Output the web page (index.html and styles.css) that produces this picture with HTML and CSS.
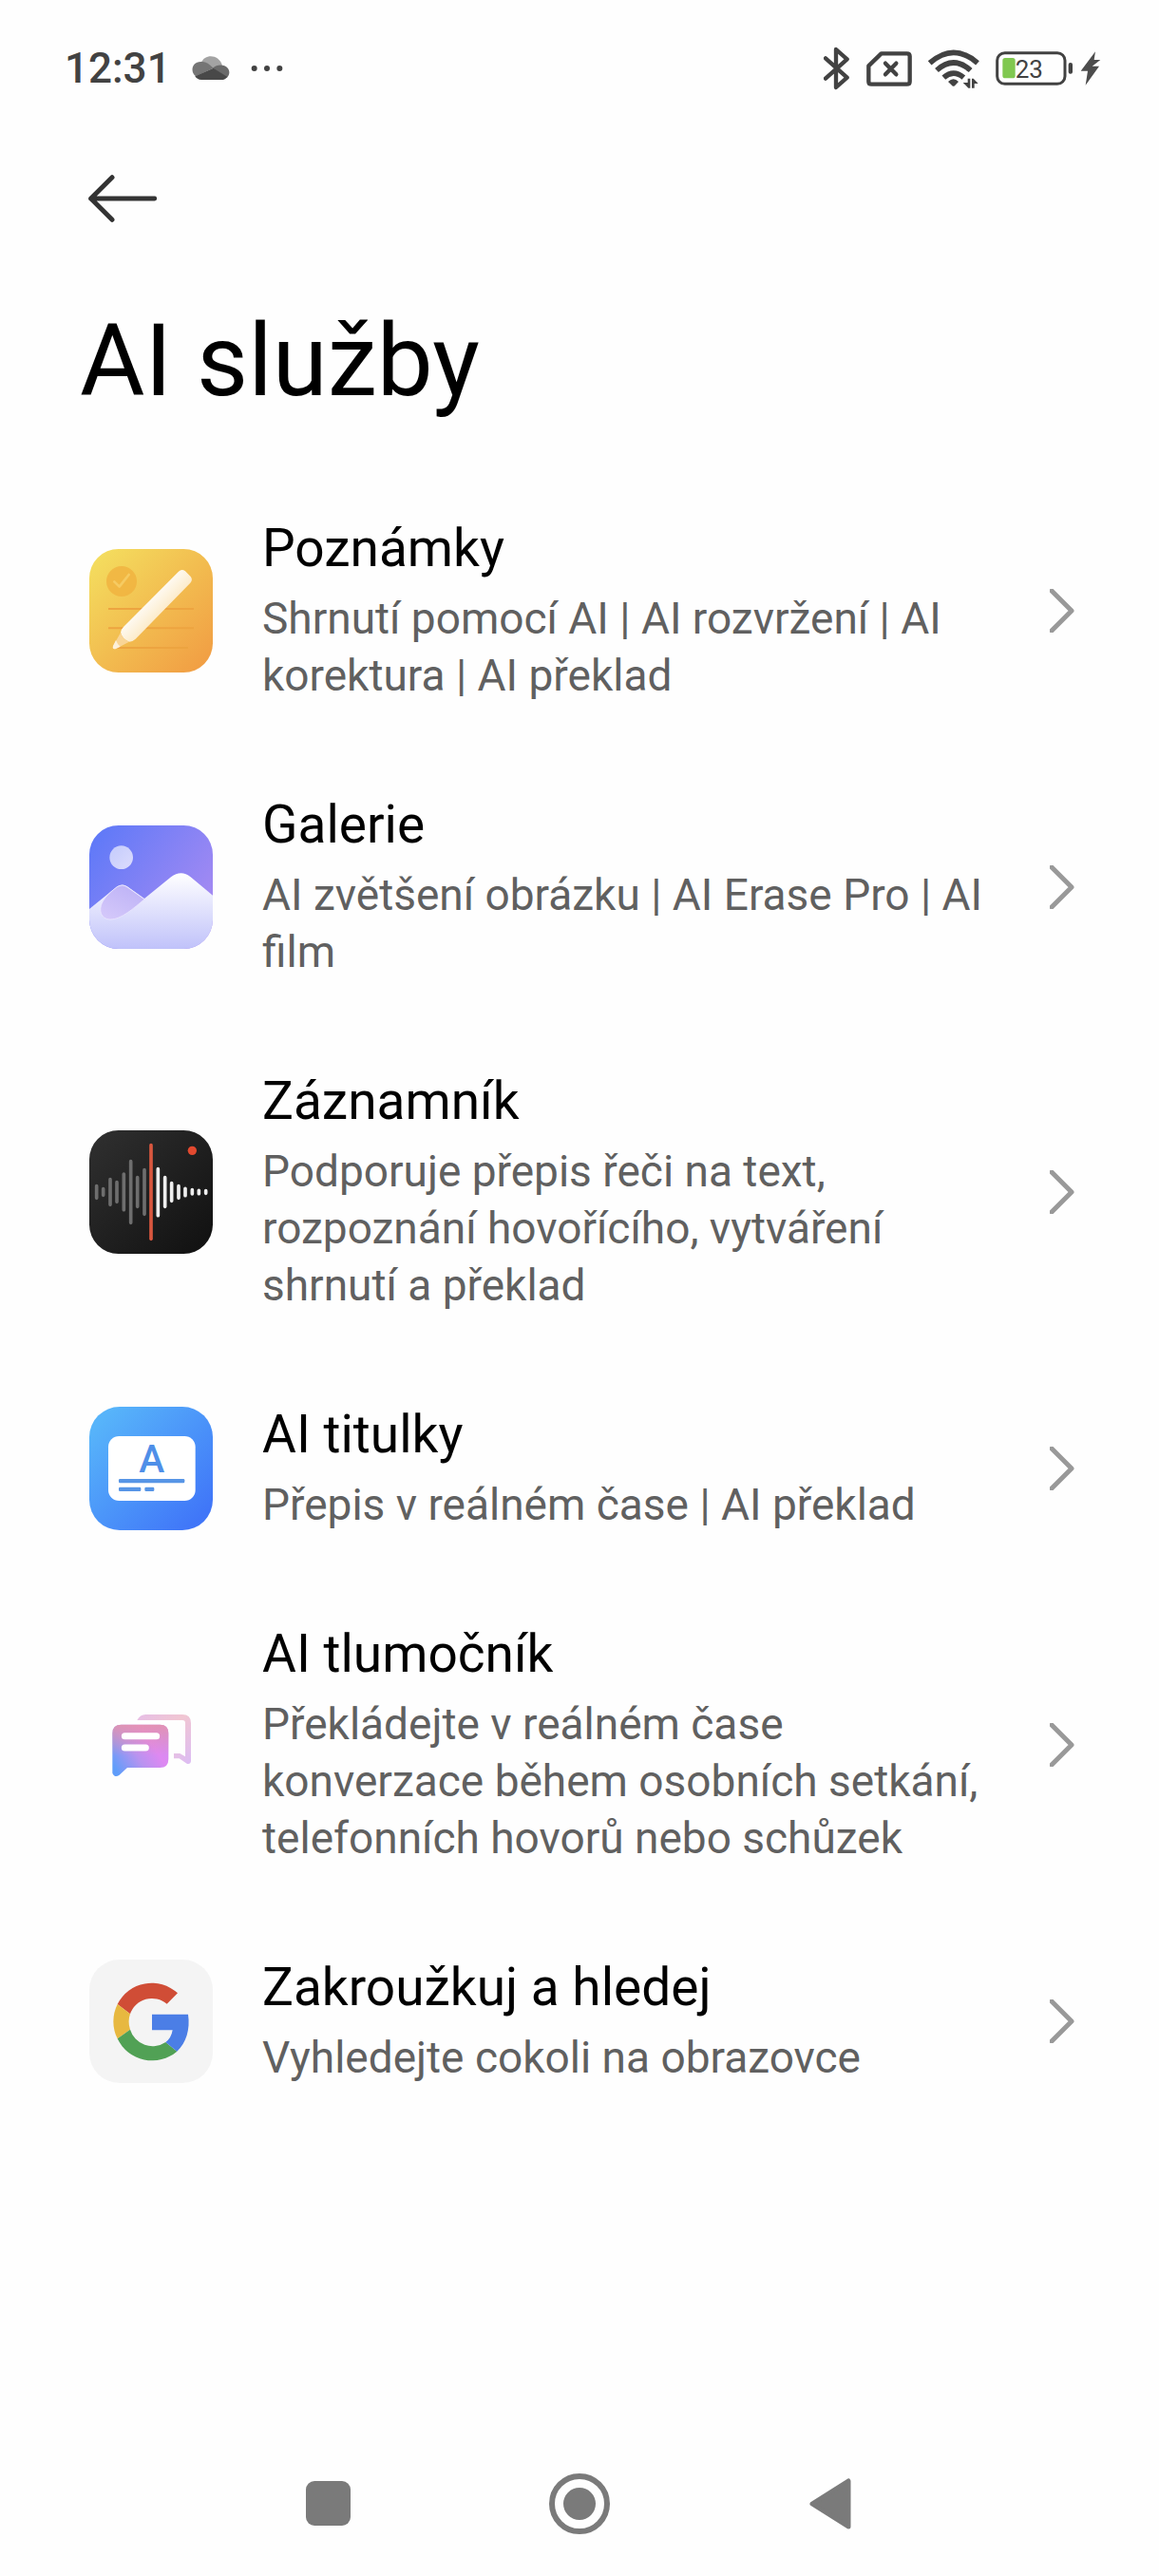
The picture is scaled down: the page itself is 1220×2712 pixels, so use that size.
FILE: index.html
```html
<!DOCTYPE html>
<html lang="cs">
<head>
    <meta charset="UTF-8">
    <meta name="viewport" content="width=device-width, initial-scale=1.0">
    <title>AI služby</title>
    <link rel="stylesheet" href="styles.css">
</head>
<body>
    <!-- Status bar -->
    <div class="status-bar">
        <div class="status-left">
            <span class="time">12:31</span>
            <svg class="cloud" width="40" height="26" viewBox="0 0 120 78">
                <path d="M30 20 C40 -6 84 -8 96 30 L68 40 Z" fill="#a3a3a3"/>
                <path d="M12 64 C-8 48 2 16 30 18 C42 16 54 24 68 38 L12 64 Z" fill="#757575"/>
                <path d="M66 38 C84 20 120 28 118 54 C117 60 114 66 110 68 Z" fill="#6a6a6a"/>
                <path d="M10 64 L68 38 L112 66 C106 74 100 75 94 75 L30 75 C20 75 14 70 10 64 Z" fill="#484848"/>
            </svg>
            <svg class="dots" width="34" height="8" viewBox="0 0 102 24">
                <g fill="#424242">
                    <circle cx="11" cy="12" r="9"/>
                    <circle cx="51" cy="12" r="9"/>
                    <circle cx="91" cy="12" r="9"/>
                </g>
            </svg>
        </div>
        <div class="status-right">
            <svg width="28" height="46" viewBox="0 0 84 138">
                <path d="M6 37 L74 98 L39 129 V9 L74 40 L6 101" fill="none" stroke="#424242" stroke-width="13" stroke-linecap="round" stroke-linejoin="round"/>
            </svg>
            <svg width="48" height="37" viewBox="0 0 144 111">
                <path d="M47 7 H128 Q137 7 137 16 V95 Q137 104 128 104 H16 Q7 104 7 95 V46 Z" fill="none" stroke="#424242" stroke-width="13" stroke-linejoin="round"/>
                <path d="M60 38 L94 73 M94 38 L60 73" stroke="#424242" stroke-width="13" stroke-linecap="round"/>
            </svg>
            <svg class="wifi" width="54" height="41" viewBox="0 0 162 123">
                <g fill="none" stroke="#424242" stroke-width="17">
                    <path d="M5 43 Q80 -23 156 43"/>
                    <path d="M27 66 Q80 18 134 66"/>
                    <path d="M49 89 Q80 62 112 89"/>
                </g>
                <path d="M63 102 Q80 86 96 102 L84 115 Q80 118 76 115 Z" fill="#424242"/>
                <path d="M125 92 H133 V122 H127 L110 105 H125 Z" fill="#424242"/>
                <path d="M138 92 H143 L158 108 H146 V122 H138 Z" fill="#424242"/>
            </svg>
            <svg class="battery" width="82" height="36" viewBox="0 0 246 108">
                <rect x="5" y="5" width="214" height="98" rx="24" fill="none" stroke="#424242" stroke-width="9"/>
                <rect x="22" y="21" width="40" height="64" rx="8" fill="#80c850"/>
                <rect x="230" y="36" width="13" height="35" rx="6" fill="#424242"/>
                <text class="battery-text" x="62" y="83">23</text>
            </svg>
            <svg class="bolt" width="22" height="36" viewBox="0 0 66 108">
                <path d="M48 1 L2 62 H24 L17 107 L60 47 H38 L64 27 H44 Z" fill="#4c4c4c"/>
            </svg>
        </div>
    </div>

    <header class="header">
        <button class="back-btn" aria-label="Zpět">
            <svg width="72" height="50" viewBox="0 0 216 150">
                <path d="M75 8 L8 75 L75 142 M8 75 H209" fill="none" stroke="#333" stroke-width="15" stroke-linecap="round" stroke-linejoin="round"/>
            </svg>
        </button>
        <h1>AI služby</h1>
    </header>

    <main>
        <ul class="services">
            <li>
                <a class="service" href="#poznamky">
                    <svg class="icon" viewBox="0 0 390 390">
                        <defs>
                            <linearGradient id="notesBg" x1="0" y1="0" x2="1" y2="1">
                                <stop offset="0" stop-color="#f4e160"/>
                                <stop offset="0.5" stop-color="#f2bd50"/>
                                <stop offset="1" stop-color="#f19a42"/>
                            </linearGradient>
                            <linearGradient id="pencil" x1="0.35" y1="0.35" x2="0.65" y2="0.65">
                                <stop offset="0" stop-color="#fff"/>
                                <stop offset="1" stop-color="#fbe6bd"/>
                            </linearGradient>
                        </defs>
                        <rect width="390" height="390" rx="92" fill="url(#notesBg)"/>
                        <circle cx="102" cy="102" r="48" fill="#f0b23e" opacity="0.8"/>
                        <path d="M79 103 L95 119 L125 81" fill="none" stroke="#f6cb62" stroke-width="8" stroke-linecap="round" stroke-linejoin="round"/>
                        <path d="M60 189 H330 M60 250 H330 M80 312 H312" stroke="#eda440" stroke-width="6"/>
                        <path d="M282 71 Q292 61 303 70 L320 87 Q328 97 319 107 L146 284 Q138 292 126 293 Q104 284 99 264 Q100 254 108 246 Z" fill="url(#pencil)"/>
                        <path d="M99 264 Q104 284 126 293 L84 315 Q72 318 75 306 Z" fill="#f9d596"/>
                        <path d="M84 288 Q88 300 98 308 L84 315 Q72 318 75 306 Z" fill="#fdf0d8"/>
                    </svg>
                    <div class="service-text">
                        <h2>Poznámky</h2>
                        <p>Shrnutí pomocí AI | AI rozvržení | AI korektura | AI překlad</p>
                    </div>
                    <svg class="chevron" viewBox="0 0 26 46"><path d="M2 2 L23 23 L2 44"/></svg>
                </a>
            </li>
            <li>
                <a class="service" href="#galerie">
                    <svg class="icon" viewBox="0 0 390 390">
                        <defs>
                            <linearGradient id="sky" x1="0" y1="0" x2="1" y2="0.7">
                                <stop offset="0" stop-color="#5a78f8"/>
                                <stop offset="1" stop-color="#a88bf2"/>
                            </linearGradient>
                            <linearGradient id="snow" x1="0" y1="0" x2="0" y2="1">
                                <stop offset="0" stop-color="#fff"/>
                                <stop offset="1" stop-color="#c0c2fa"/>
                            </linearGradient>
                            <linearGradient id="moon" x1="0" y1="0" x2="1" y2="1">
                                <stop offset="0" stop-color="#c4cbfc"/>
                                <stop offset="1" stop-color="#dcdcfd"/>
                            </linearGradient>
                            <linearGradient id="hill" x1="0.8" y1="0" x2="0.2" y2="1">
                                <stop offset="0" stop-color="#bdb2f6"/>
                                <stop offset="1" stop-color="#d4c8fa"/>
                            </linearGradient>
                            <clipPath id="galleryClip"><rect width="390" height="390" rx="92"/></clipPath>
                        </defs>
                        <g clip-path="url(#galleryClip)">
                            <rect width="390" height="390" fill="url(#sky)"/>
                            <circle cx="101" cy="101" r="37" fill="url(#moon)"/>
                            <path d="M0 264 L88 193 Q105 182 120 193 L174 231 L258 163 Q290 138 320 163 L390 221 V390 H0 Z" fill="url(#snow)"/>
                            <path d="M88 194 Q105 184 120 195 L174 233 C142 260 100 298 66 297 C34 296 28 264 44 238 C54 220 72 206 88 194 Z" fill="url(#hill)" stroke="#f0ecff" stroke-width="2"/>
                        </g>
                    </svg>
                    <div class="service-text">
                        <h2>Galerie</h2>
                        <p>AI zvětšení obrázku | AI Erase Pro | AI film</p>
                    </div>
                    <svg class="chevron" viewBox="0 0 26 46"><path d="M2 2 L23 23 L2 44"/></svg>
                </a>
            </li>
            <li>
                <a class="service" href="#zaznamnik">
                    <svg class="icon" viewBox="0 0 390 390">
                        <defs>
                            <linearGradient id="recBg" x1="0" y1="0" x2="1" y2="1">
                                <stop offset="0" stop-color="#303030"/>
                                <stop offset="1" stop-color="#101010"/>
                            </linearGradient>
                        </defs>
                        <rect width="390" height="390" rx="92" fill="url(#recBg)"/>
                        <circle cx="325" cy="64" r="14" fill="#e2492f"/>
                        <g stroke-width="11" stroke-linecap="round">
                            <path d="M23 176 V214 M44 185 V205 M66 155 V235 M87 164 V226 M109 138 V251 M131 98 V292 M152 149 V241 M174 125 V265" stroke="#6e6e6e"/>
                            <path d="M217 122 V269 M239 149 V241 M260 167 V223 M282 176 V214 M303 184 V206 M325 188 V201 M346 190 V200 M368 191 V199" stroke="#eee"/>
                            <path d="M195 47 V343" stroke="#d9573f"/>
                        </g>
                    </svg>
                    <div class="service-text">
                        <h2>Záznamník</h2>
                        <p>Podporuje přepis řeči na text, rozpoznání hovořícího, vytváření shrnutí a překlad</p>
                    </div>
                    <svg class="chevron" viewBox="0 0 26 46"><path d="M2 2 L23 23 L2 44"/></svg>
                </a>
            </li>
            <li>
                <a class="service" href="#titulky">
                    <svg class="icon" viewBox="0 0 390 390">
                        <defs>
                            <linearGradient id="subBg" x1="0" y1="0" x2="1" y2="1">
                                <stop offset="0.1" stop-color="#57b4fa"/>
                                <stop offset="0.9" stop-color="#4076f8"/>
                            </linearGradient>
                        </defs>
                        <rect width="390" height="390" rx="96" fill="url(#subBg)"/>
                        <rect x="60" y="93" width="275" height="204" rx="34" fill="#fff"/>
                        <text class="icon-letter" x="197" y="206">A</text>
                        <g fill="#5795e6">
                            <rect x="93" y="228" width="208" height="13" rx="4"/>
                            <rect x="93" y="254" width="70" height="13" rx="4"/>
                            <rect x="175" y="254" width="30" height="13" rx="4"/>
                        </g>
                    </svg>
                    <div class="service-text">
                        <h2>AI titulky</h2>
                        <p>Přepis v reálném čase | AI překlad</p>
                    </div>
                    <svg class="chevron" viewBox="0 0 26 46"><path d="M2 2 L23 23 L2 44"/></svg>
                </a>
            </li>
            <li>
                <a class="service" href="#tlumocnik">
                    <svg class="icon" viewBox="0 0 390 390">
                        <defs>
                            <linearGradient id="bubble" x1="0" y1="0.9" x2="1" y2="0.3">
                                <stop offset="0.05" stop-color="#5f9dfa"/>
                                <stop offset="0.45" stop-color="#b893f0"/>
                                <stop offset="0.75" stop-color="#de88f2"/>
                                <stop offset="1" stop-color="#d28cf0"/>
                            </linearGradient>
                            <linearGradient id="bubbleTop" x1="0" y1="0" x2="0" y2="1">
                                <stop offset="0" stop-color="#e694a4" stop-opacity="0.8"/>
                                <stop offset="0.6" stop-color="#e694a4" stop-opacity="0"/>
                            </linearGradient>
                            <linearGradient id="bubbleBack" x1="0" y1="0" x2="1" y2="1">
                                <stop offset="0" stop-color="#e6bee6"/>
                                <stop offset="0.45" stop-color="#f1c6d2"/>
                                <stop offset="1" stop-color="#dcbcf4"/>
                            </linearGradient>
                        </defs>
                        <path d="M151 117 Q160 99 178 99 H294 Q321 99 321 126 V246 Q320 257 308 254 L284 238 H267 V222 H286 L303 232 V126 Q303 117 294 117 Z" fill="url(#bubbleBack)"/>
                        <path d="M101 131 H223 Q250 131 250 158 V240 Q250 267 223 267 H120 L94 291 Q80 300 73 284 V158 Q73 131 101 131 Z" fill="url(#bubble)"/>
                        <path d="M101 131 H223 Q250 131 250 158 V240 Q250 267 223 267 H120 L94 291 Q80 300 73 284 V158 Q73 131 101 131 Z" fill="url(#bubbleTop)"/>
                        <path d="M112 167 H212 M112 204 H178" stroke="#fff" stroke-width="21" stroke-linecap="round"/>
                    </svg>
                    <div class="service-text">
                        <h2>AI tlumočník</h2>
                        <p>Překládejte v reálném čase konverzace během osobních setkání, telefonních hovorů nebo schůzek</p>
                    </div>
                    <svg class="chevron" viewBox="0 0 26 46"><path d="M2 2 L23 23 L2 44"/></svg>
                </a>
            </li>
            <li>
                <a class="service" href="#hledej">
                    <svg class="icon" viewBox="0 0 390 390">
                        <rect width="390" height="390" rx="96" fill="#f4f4f4"/>
                        <path d="M279 106 A121 121 0 0 0 89 141 L129 172 A73 73 0 0 1 245 140 Z" fill="#d04d36"/>
                        <path d="M89 141 A121 121 0 0 0 89 250 L129 221 A73 73 0 0 1 129 172 Z" fill="#e7b840"/>
                        <path d="M89 250 A121 121 0 0 0 277 290 L241 261 A74 74 0 0 1 129 221 Z" fill="#51a155"/>
                        <path d="M198 173 H312 C319 220 306 262 277 290 L241 261 Q259 248 263 223 H198 Z" fill="#4b7ee6"/>
                    </svg>
                    <div class="service-text">
                        <h2>Zakroužkuj a hledej</h2>
                        <p>Vyhledejte cokoli na obrazovce</p>
                    </div>
                    <svg class="chevron" viewBox="0 0 26 46"><path d="M2 2 L23 23 L2 44"/></svg>
                </a>
            </li>
        </ul>
    </main>

    <!-- System navigation -->
    <nav class="nav-bar">
        <button aria-label="Poslední aplikace">
            <svg width="48" height="48" viewBox="0 0 48 48"><rect width="47" height="47" rx="9" fill="#7a7a7a"/></svg>
        </button>
        <button aria-label="Domů">
            <svg width="64" height="64" viewBox="0 0 64 64">
                <circle cx="32" cy="32" r="29" fill="none" stroke="#7a7a7a" stroke-width="6"/>
                <circle cx="32" cy="32" r="17" fill="#7a7a7a"/>
            </svg>
        </button>
        <button aria-label="Zpět">
            <svg width="44" height="54" viewBox="0 0 44 54"><path d="M3 27 L41 3 V51 Z" fill="#7a7a7a" stroke="#7a7a7a" stroke-width="5" stroke-linejoin="round"/></svg>
        </button>
    </nav>
</body>
</html>
```
FILE: styles.css
```css
* {
    margin: 0;
    padding: 0;
    box-sizing: border-box;
    font-family: Roboto, "Noto Sans", sans-serif;
}

body {
    background: #fefefe;
    color: #000;
    min-height: 100vh;
    display: flex;
    flex-direction: column;
}

button {
    background: none;
    border: none;
    cursor: pointer;
}

svg {
    display: block;
    flex-shrink: 0;
}

.status-bar {
    display: flex;
    justify-content: space-between;
    align-items: center;
    height: 144px;
    padding: 0 61px 0 68px;
    color: #424242;
}

.status-left,
.status-right {
    display: flex;
    align-items: center;
}

.status-left {
    gap: 22px;
}

.status-right {
    gap: 17px;
}

.time {
    font-size: 44px;
    font-weight: 500;
    line-height: 52px;
}

.battery-text {
    font-size: 78px;
    fill: #424242;
}

.bolt {
    margin-left: -10px;
}

.header {
    padding: 40px 84px 0;
}

.back-btn {
    display: block;
    padding: 0 9px;
}

h1 {
    margin-top: 86px;
    font-size: 105px;
    font-weight: 400;
    line-height: 122px;
}

main {
    flex: 1;
    padding-top: 55px;
}

.services {
    list-style: none;
}

.service {
    display: flex;
    align-items: center;
    gap: 52px;
    padding: 47px 89px 47px 94px;
    color: inherit;
    text-decoration: none;
}

.icon {
    width: 130px;
    height: 130px;
}

.icon-letter {
    font-size: 122px;
    font-weight: 500;
    text-anchor: middle;
    fill: #4f8fe8;
}

.service-text {
    flex: 1;
    padding-right: 10px;
}

.service-text h2 {
    font-size: 55px;
    font-weight: 400;
    line-height: 66px;
    margin-bottom: 11px;
}

.service-text p {
    font-size: 46px;
    line-height: 60px;
    color: #606060;
}

.chevron {
    width: 26px;
    height: 46px;
    fill: none;
    stroke: #999;
    stroke-width: 5;
    stroke-linecap: round;
    stroke-linejoin: round;
}

.nav-bar {
    display: flex;
    justify-content: center;
    height: 152px;
}

.nav-bar button {
    width: 264px;
    display: flex;
    justify-content: center;
    align-items: center;
}
```
